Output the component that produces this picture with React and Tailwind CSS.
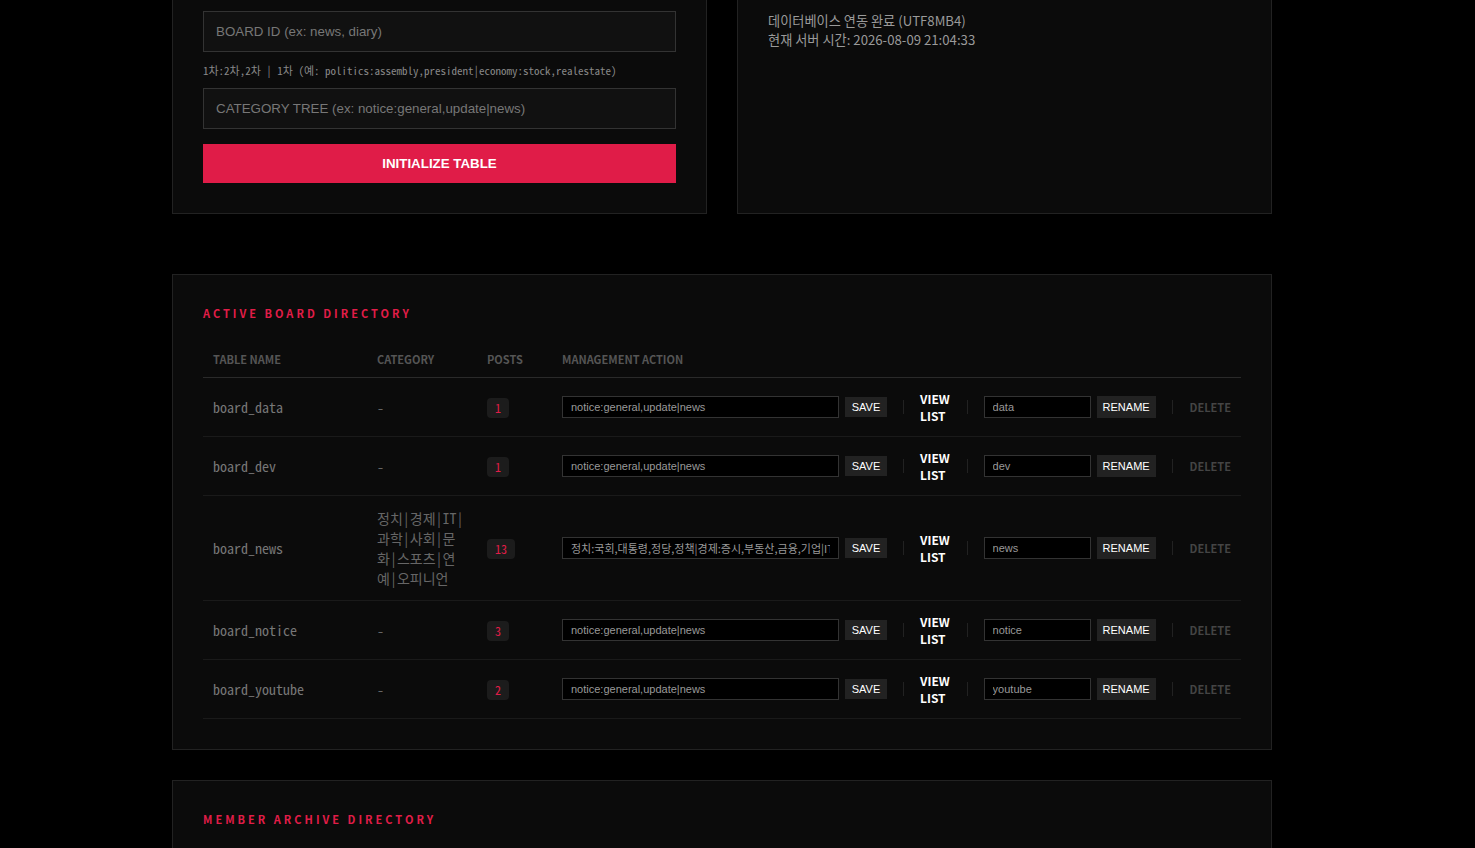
import React from "react";

const SANS = "font-['Noto_Sans_CJK_KR','Noto_Sans',sans-serif]";
const MONO = "font-['Noto_Sans_Mono_CJK_KR','DejaVu_Sans_Mono',monospace]";
const ARIAL = "font-['Liberation_Sans',Arial,sans-serif]";

const boards = [
  { name: "board_data", category: null, posts: 1, tree: "notice:general,update|news", short: "data" },
  { name: "board_dev", category: null, posts: 1, tree: "notice:general,update|news", short: "dev" },
  {
    name: "board_news",
    category: "정치|경제|IT|과학|사회|문화|스포츠|연예|오피니언",
    posts: 13,
    tree: "정치:국회,대통령,정당,정책|경제:증시,부동산,금융,기업|IT:AI,반도체,모바일",
    short: "news",
  },
  { name: "board_notice", category: null, posts: 3, tree: "notice:general,update|news", short: "notice" },
  { name: "board_youtube", category: null, posts: 2, tree: "notice:general,update|news", short: "youtube" },
];

function Divider() {
  return <span className="mx-4 h-[14px] w-px shrink-0 bg-[#222]" />;
}

function SectionTitle({ children }) {
  return (
    <h2 className={`${SANS} text-[11px] font-bold leading-4 tracking-[3px] text-[#e11d48]`}>{children}</h2>
  );
}

function BoardRow({ b }) {
  return (
    <tr className="border-b border-[#1a1a1a]">
      <td className={`${MONO} px-[10px] py-3 align-middle text-[14px] text-[#777]`}>{b.name}</td>
      <td className={`${MONO} break-all px-[10px] py-3 align-middle text-[14px] leading-5 text-[#666]`}>
        {b.category ?? "-"}
      </td>
      <td className="px-[10px] py-3 align-middle">
        <span className={`${MONO} inline-flex h-5 items-center rounded bg-[#1c1c1c] px-2 text-[12px] text-[#e11d48]`}>
          {b.posts}
        </span>
      </td>
      <td className="px-[10px] py-3 align-middle">
        <div className="flex items-center">
          <input
            readOnly
            value={b.tree}
            className={`${b.category ? SANS : ARIAL} h-[22px] w-[277px] shrink-0 border border-[#333] bg-black px-2 text-[11px] text-[#999] outline-none`}
          />
          <button className={`${ARIAL} ml-[6px] h-5 w-[42px] shrink-0 bg-[#222] text-[11px] text-white`}>SAVE</button>
          <Divider />
          <span className={`${SANS} w-[31px] text-[12px] font-bold leading-[17px] text-white`}>
            VIEW
            <br />
            LIST
          </span>
          <Divider />
          <input
            readOnly
            value={b.short}
            className={`${ARIAL} h-[22px] w-[107px] shrink-0 border border-[#333] bg-black px-2 text-[11px] text-[#999] outline-none`}
          />
          <button className={`${ARIAL} ml-[6px] h-[22px] w-[59px] shrink-0 bg-[#222] text-[11px] text-white`}>
            RENAME
          </button>
          <Divider />
          <span className={`${SANS} ml-[1px] text-[11px] font-bold text-[#444]`}>DELETE</span>
        </div>
      </td>
    </tr>
  );
}

export default function App() {
  return (
    <div className="min-h-screen bg-black pb-20">
      <div className="ml-[172px] w-[1100px]">
        {/* setup forms */}
        <div className="grid grid-cols-2 gap-[30px]">
          <div className="border border-t-0 border-[#222] bg-[#0b0b0b] px-[30px] pb-[30px] pt-[11px]">
            <input
              placeholder="BOARD ID (ex: news, diary)"
              className={`${ARIAL} block h-[41px] w-full border border-[#333] bg-[#111] px-[12px] text-[13.33px] text-[#ccc] outline-none placeholder:text-[#777]`}
            />
            <p className={`${MONO} mt-[10px] text-[11px] leading-4 text-[#888]`}>
              1차:2차,2차 | 1차 (예: politics:assembly,president|economy:stock,realestate)
            </p>
            <input
              placeholder="CATEGORY TREE (ex: notice:general,update|news)"
              className={`${ARIAL} mt-[10px] block h-[41px] w-full border border-[#333] bg-[#111] px-[12px] text-[13.33px] text-[#ccc] outline-none placeholder:text-[#777]`}
            />
            <button
              className={`${ARIAL} mt-[15px] block h-[39px] w-full bg-[#e01c48] text-[13.33px] font-bold text-white`}
            >
              INITIALIZE TABLE
            </button>
          </div>
          <div
            className={`${SANS} border border-t-0 border-[#222] bg-[#0b0b0b] px-[30px] pt-[11px] text-[13.2px] leading-[19px] text-[#9a9a9a]`}
          >
            <p>데이터베이스 연동 완료 (UTF8MB4)</p>
            <p>현재 서버 시간: 2026-08-09 21:04:33</p>
          </div>
        </div>

        {/* board directory */}
        <section className="mt-[60px] border border-[#222] bg-[#0b0b0b] px-[30px] pb-[30px] pt-[30px]">
          <SectionTitle>ACTIVE BOARD DIRECTORY</SectionTitle>
          <table className="mt-5 w-full table-fixed border-collapse text-left">
            <thead>
              <tr className={`${SANS} border-b border-[#2a2a2a] text-[11px] font-bold leading-4 text-[#555]`}>
                <th className="w-[164px] px-[10px] py-[10px] font-bold">TABLE NAME</th>
                <th className="w-[110px] px-[10px] py-[10px] font-bold">CATEGORY</th>
                <th className="w-[75px] px-[10px] py-[10px] font-bold">POSTS</th>
                <th className="px-[10px] py-[10px] font-bold">MANAGEMENT ACTION</th>
              </tr>
            </thead>
            <tbody>
              {boards.map((b) => (
                <BoardRow key={b.name} b={b} />
              ))}
            </tbody>
          </table>
        </section>

        {/* members */}
        <section className="mt-[30px] h-[200px] border border-[#222] bg-[#0b0b0b] px-[30px] pt-[30px]">
          <SectionTitle>MEMBER ARCHIVE DIRECTORY</SectionTitle>
        </section>
      </div>
    </div>
  );
}
